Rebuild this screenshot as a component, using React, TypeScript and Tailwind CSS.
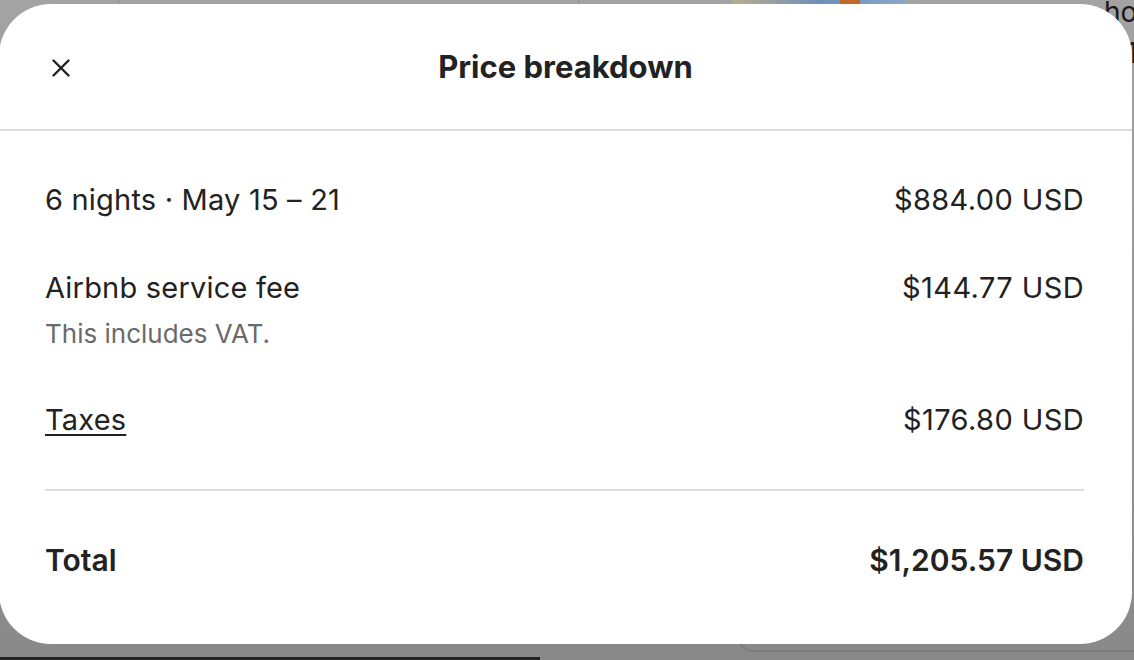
import React from "react";

function CloseIcon() {
  return (
    <svg width="24" height="24" viewBox="0 0 32 32" fill="none" stroke="#222222" strokeWidth="3.2" strokeLinecap="round">
      <path d="M6 6 L26 26 M26 6 L6 26" />
    </svg>
  );
}

function Row({ label, amount, sub, underline }: { label: string; amount: string; sub?: string; underline?: boolean }) {
  return (
    <div className="flex justify-between items-start">
      <div className="flex flex-col">
        <span className={"text-[29px] leading-[40px] tracking-[0.2px] text-[#222222]" + (underline ? " underline decoration-[2px] underline-offset-[4px]" : "")}>{label}</span>
        {sub && <span className="mt-[8px] text-[26px] leading-[36px] text-[#6a6a6a]">{sub}</span>}
      </div>
      <span className="text-[29px] leading-[40px] tracking-[0.4px] text-[#222222]">{amount}</span>
    </div>
  );
}

export default function App() {
  return (
    <div
      className="relative w-[1134px] h-[660px] overflow-hidden bg-gradient-to-b from-[#a3a3a3] to-[#898989]"
      style={{ fontFamily: "Inter, 'Noto Sans', Arial, sans-serif" }}
    >
      {/* background page peeking around the modal */}
      <div className="absolute left-[118px] top-0 w-px h-[8px] bg-[#8f8f8f]" />
      <div className="absolute left-[578px] top-0 w-px h-[8px] bg-[#8f8f8f]" />
      <div className="absolute left-[733px] top-0 w-[172px] h-[8px] bg-gradient-to-r from-[#b9ac8e] via-[#6f8fb8] to-[#8aa6c9]" />
      <div className="absolute left-[840px] top-0 w-[20px] h-[8px] bg-[#c06a2a]" />
      <div className="absolute left-[1104px] top-[-6px] text-[28px] leading-[36px] text-[#1a1a1a]">ho</div>
      <div className="absolute left-[1126px] top-[38px] text-[28px] leading-[30px] text-[#1a1a1a]">1</div>
      <div className="absolute left-[737px] top-[600px] w-[420px] h-[52px] rounded-bl-[16px] border-l-2 border-b-2 border-[#7c7c7c]" />
      <div className="absolute left-0 bottom-0 w-[540px] h-[3px] bg-[#222222]" />

      {/* modal */}
      <div className="relative ml-[-1px] mt-[4px] w-[1133px] h-[640px] rounded-[52px] bg-white">
        <div className="relative h-[127px] flex items-center justify-center border-b-2 border-[#dddddd]">
          <button className="absolute left-[50px] top-[52px] w-[24px] h-[24px] flex items-center justify-center">
            <CloseIcon />
          </button>
          <h1 className="text-[31px] leading-[36px] font-bold text-[#222222]">Price breakdown</h1>
        </div>
        <div className="pl-[46px] pr-[48px]">
          <div className="pt-[49px] pb-[49px] flex flex-col gap-[48px]">
            <Row label="6 nights · May 15 – 21" amount="$884.00 USD" />
            <Row label="Airbnb service fee" amount="$144.77 USD" sub="This includes VAT." />
            <Row label="Taxes" amount="$176.80 USD" underline />
          </div>
          <div className="h-[2px] bg-[#dddddd]" />
          <div className="pt-[49px] flex justify-between">
            <span className="text-[30px] leading-[40px] font-semibold text-[#222222]">Total</span>
            <span className="text-[30px] leading-[40px] font-semibold text-[#222222]">$1,205.57 USD</span>
          </div>
        </div>
      </div>
    </div>
  );
}
